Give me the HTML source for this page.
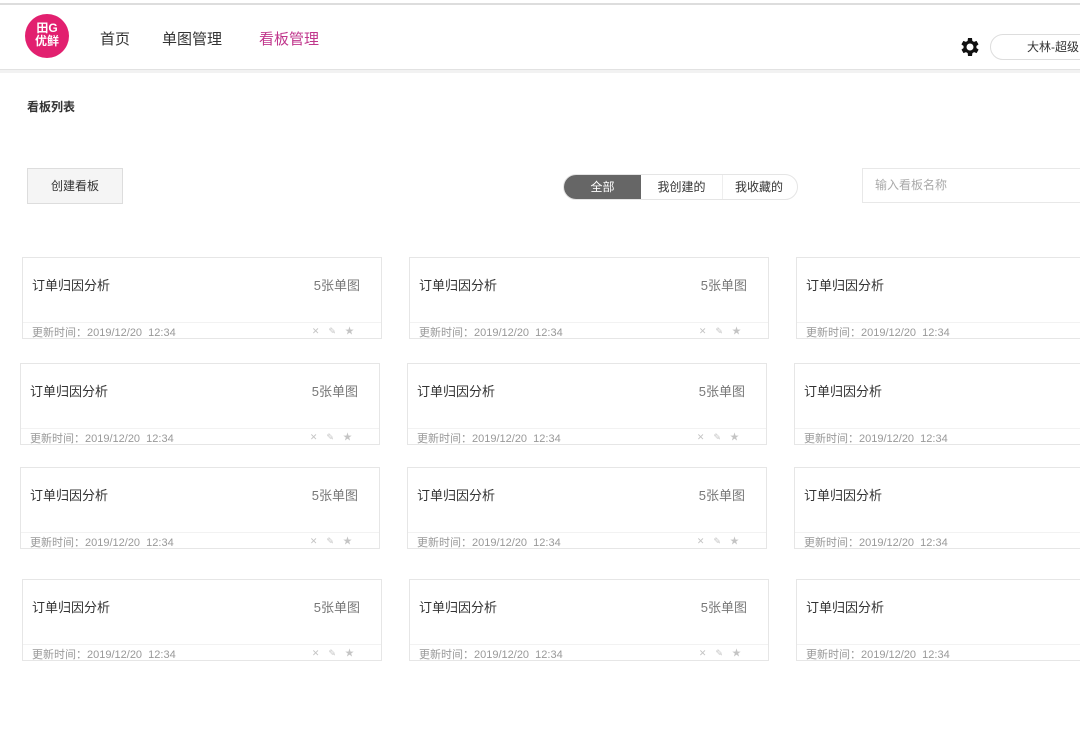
<!DOCTYPE html>
<html><head><meta charset="utf-8"><style>
*{margin:0;padding:0;box-sizing:border-box}
html,body{width:1080px;height:733px;overflow:hidden}
body{background:#fff;font-family:"Liberation Sans","Noto Sans CJK SC",sans-serif;color:#333;position:relative}
#w{position:absolute;left:0;top:0;width:1080px;height:733px;overflow:hidden}
.a{position:absolute}
.card{position:absolute;width:360px;height:82px;border:1px solid #e6e6e6;background:#fff}
.card .t{position:absolute;left:9px;top:17px;font-size:13px;color:#333}
.card .n{position:absolute;right:21px;top:17px;font-size:13px;color:#777}
.card .l{position:absolute;left:0;right:0;top:64px;border-top:1px solid #f2f2f2}
.card .f{position:absolute;left:9px;top:66px;font-size:11px;color:#999}
.card .i{position:absolute;right:18px;top:66px;font-size:9px;color:#c4c4c4;letter-spacing:9px}
</style></head><body><div id="w">
<div class="a" style="left:0;top:3px;width:1080px;border-top:2px solid #ddd"></div>
<div class="a" style="left:0;top:69px;width:1080px;border-top:1px solid #e2e2e2;height:4px;background:#f2f2f2"></div>
<div class="a" style="left:25px;top:14px;width:44px;height:44px;border-radius:50%;background:#e2206f;color:#fff;font-size:12px;line-height:13px;text-align:center;padding-top:8px;font-weight:bold">田G<br>优鲜</div>
<div class="a" style="left:100px;top:28px;font-size:15px;color:#333">首页</div>
<div class="a" style="left:162px;top:28px;font-size:15px;color:#333">单图管理</div>
<div class="a" style="left:259px;top:28px;font-size:15px;color:#c0368c">看板管理</div>
<svg class="a" style="left:957px;top:35px" width="24" height="24" viewBox="0 0 24 24"><path fill="#111" d="M19.4 13a7.5 7.5 0 000-2l2.1-1.6-2-3.5-2.5 1a7 7 0 00-1.7-1L15 3h-4l-.4 2.9a7 7 0 00-1.7 1l-2.5-1-2 3.5L6.6 11a7.5 7.5 0 000 2l-2.1 1.6 2 3.5 2.5-1a7 7 0 001.7 1L11 21h4l.4-2.9a7 7 0 001.7-1l2.5 1 2-3.5zM13 15.5a3.5 3.5 0 110-7 3.5 3.5 0 010 7z"/></svg>
<div class="a" style="left:990px;top:34px;width:110px;height:26px;border:1px solid #ddd;border-radius:13px;font-size:12px;line-height:24px;padding-left:36px;color:#333">大林-超级</div>
<div class="a" style="left:27px;top:98px;font-size:12px;font-weight:bold;color:#333">看板列表</div>
<div class="a" style="left:27px;top:168px;width:96px;height:36px;border:1px solid #ddd;background:#f5f5f5;font-size:12px;line-height:34px;text-align:center;color:#333">创建看板</div>
<div class="a" style="left:563px;top:174px;width:235px;height:26px;border:1px solid #e5e5e5;border-radius:13px;overflow:hidden;font-size:12px;line-height:24px">
<div class="a" style="left:0;top:0;width:77px;height:24px;background:#666;color:#fff;text-align:center">全部</div>
<div class="a" style="left:77px;top:0;width:82px;text-align:center;color:#333;border-right:1px solid #eee">我创建的</div>
<div class="a" style="left:160px;top:0;width:70px;text-align:center;color:#333">我收藏的</div></div>
<div class="a" style="left:862px;top:168px;width:230px;height:35px;border:1px solid #e8e8e8;font-size:12px;line-height:33px;padding-left:12px;color:#aaa">输入看板名称</div>

<div class="card" style="left:22px;top:257px"><div class="t">订单归因分析</div><div class="n">5张单图</div><div class="l"></div><div class="f">更新时间：2019/12/20&nbsp;&nbsp;12:34</div><div class="i">✕✎★</div></div>
<div class="card" style="left:409px;top:257px"><div class="t">订单归因分析</div><div class="n">5张单图</div><div class="l"></div><div class="f">更新时间：2019/12/20&nbsp;&nbsp;12:34</div><div class="i">✕✎★</div></div>
<div class="card" style="left:796px;top:257px"><div class="t">订单归因分析</div><div class="n">5张单图</div><div class="l"></div><div class="f">更新时间：2019/12/20&nbsp;&nbsp;12:34</div><div class="i">✕✎★</div></div>
<div class="card" style="left:20px;top:363px"><div class="t">订单归因分析</div><div class="n">5张单图</div><div class="l"></div><div class="f">更新时间：2019/12/20&nbsp;&nbsp;12:34</div><div class="i">✕✎★</div></div>
<div class="card" style="left:407px;top:363px"><div class="t">订单归因分析</div><div class="n">5张单图</div><div class="l"></div><div class="f">更新时间：2019/12/20&nbsp;&nbsp;12:34</div><div class="i">✕✎★</div></div>
<div class="card" style="left:794px;top:363px"><div class="t">订单归因分析</div><div class="n">5张单图</div><div class="l"></div><div class="f">更新时间：2019/12/20&nbsp;&nbsp;12:34</div><div class="i">✕✎★</div></div>
<div class="card" style="left:20px;top:467px"><div class="t">订单归因分析</div><div class="n">5张单图</div><div class="l"></div><div class="f">更新时间：2019/12/20&nbsp;&nbsp;12:34</div><div class="i">✕✎★</div></div>
<div class="card" style="left:407px;top:467px"><div class="t">订单归因分析</div><div class="n">5张单图</div><div class="l"></div><div class="f">更新时间：2019/12/20&nbsp;&nbsp;12:34</div><div class="i">✕✎★</div></div>
<div class="card" style="left:794px;top:467px"><div class="t">订单归因分析</div><div class="n">5张单图</div><div class="l"></div><div class="f">更新时间：2019/12/20&nbsp;&nbsp;12:34</div><div class="i">✕✎★</div></div>
<div class="card" style="left:22px;top:579px"><div class="t">订单归因分析</div><div class="n">5张单图</div><div class="l"></div><div class="f">更新时间：2019/12/20&nbsp;&nbsp;12:34</div><div class="i">✕✎★</div></div>
<div class="card" style="left:409px;top:579px"><div class="t">订单归因分析</div><div class="n">5张单图</div><div class="l"></div><div class="f">更新时间：2019/12/20&nbsp;&nbsp;12:34</div><div class="i">✕✎★</div></div>
<div class="card" style="left:796px;top:579px"><div class="t">订单归因分析</div><div class="n">5张单图</div><div class="l"></div><div class="f">更新时间：2019/12/20&nbsp;&nbsp;12:34</div><div class="i">✕✎★</div></div>
</div></body></html>
